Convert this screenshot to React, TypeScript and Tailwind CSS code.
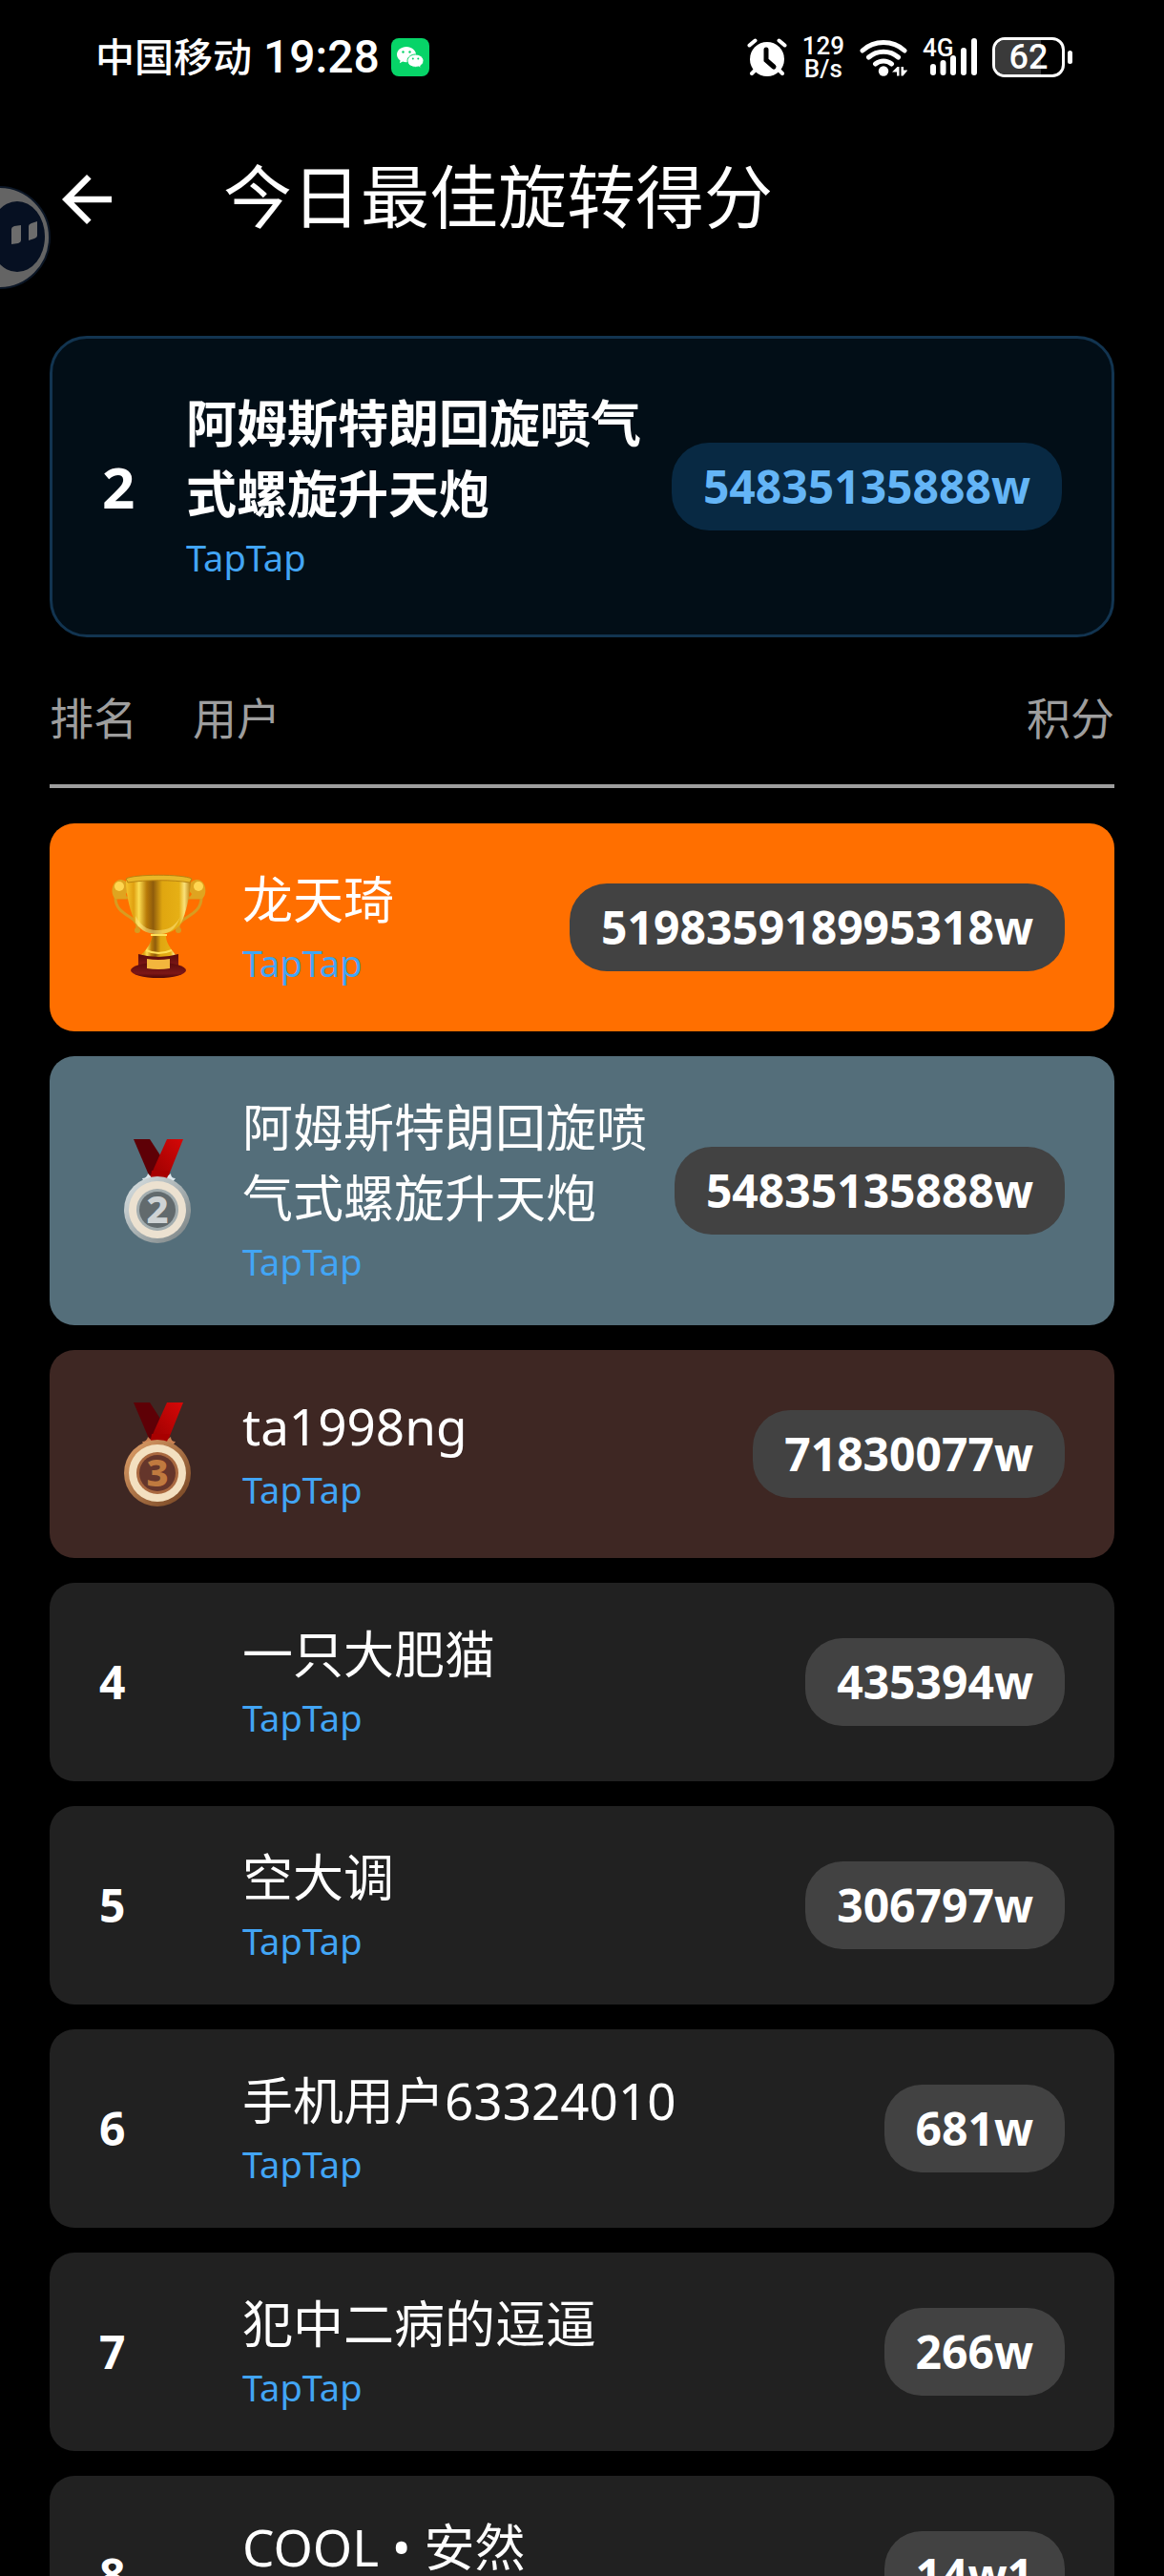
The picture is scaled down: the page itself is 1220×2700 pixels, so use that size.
import type { ReactNode } from "react";
import { MdArrowBack } from "react-icons/md";

type Player = {
  name: string;
  rank: number;
  score: string;
  source: string;
};

const me: Player = { name: "阿姆斯特朗回旋喷气式螺旋升天炮", rank: 2, score: "54835135888w", source: "TapTap" };

const players: Player[] = [
  { name: "龙天琦", rank: 1, score: "519835918995318w", source: "TapTap" },
  { name: "阿姆斯特朗回旋喷气式螺旋升天炮", rank: 2, score: "54835135888w", source: "TapTap" },
  { name: "ta1998ng", rank: 3, score: "71830077w", source: "TapTap" },
  { name: "一只大肥猫", rank: 4, score: "435394w", source: "TapTap" },
  { name: "空大调", rank: 5, score: "306797w", source: "TapTap" },
  { name: "手机用户63324010", rank: 6, score: "681w", source: "TapTap" },
  { name: "犯中二病的逗逼", rank: 7, score: "266w", source: "TapTap" },
  { name: "COOL • 安然", rank: 8, score: "14w1", source: "TapTap" },
];

export default function App() {
  return (
    <div className="relative h-screen overflow-hidden bg-black font-['Noto_Sans','Noto_Sans_CJK_SC',sans-serif] text-white">
      <StatusBar />

      <header className="flex h-[170px] items-center gap-[104px] px-[52px]">
        <button aria-label="返回" className="mt-2" type="button">
          <MdArrowBack className="size-[78px]" />
        </button>
        <h1 className="text-[72px] leading-[96px]">今日最佳旋转得分</h1>
      </header>

      <main className="px-[52px] pt-[62px]">
        <section className="flex items-center rounded-[39px] border-3 border-[#123450] bg-[#020e17] p-[52px]">
          <p className="w-[88px] shrink-0 text-[60px] leading-[92px] font-bold">{me.rank}</p>
          <PlayerName bold player={me} />
          <p className="ml-[26px] shrink-0 rounded-[39px] bg-[#082943] px-[33px] text-[48px] leading-[92px] font-bold text-[#64b5f6]">{me.score}</p>
        </section>

        <table className="mt-[52px] block">
          <thead className="block border-b-4 border-[#9e9e9e] pb-[38px] text-[46px] leading-[64px] text-[#9e9e9e]">
            <tr className="flex">
              <th className="w-[150px] text-left font-normal" scope="col">排名</th>
              <th className="flex-1 text-left font-normal" scope="col">用户</th>
              <th className="font-normal" scope="col">积分</th>
            </tr>
          </thead>
          <tbody className="mt-[37px] flex flex-col gap-[26px]">
            {players.map((player) => (
              <PlayerRow key={player.rank} player={player} />
            ))}
          </tbody>
        </table>
      </main>

      <FloatingBall />
    </div>
  );
}

function PlayerRow({ player }: { player: Player }) {
  const tones: Record<number, string> = {
    1: "min-h-[218px] bg-[#ff6f00]",
    2: "min-h-[218px] bg-[#546e7a]",
    3: "min-h-[218px] bg-[#3e2723]",
  };
  const badges: Record<number, ReactNode> = {
    1: <Trophy />,
    2: <Medal rank={2} />,
    3: <Medal rank={3} />,
  };

  return (
    <tr className={`flex items-center rounded-[26px] px-[52px] py-[38px] ${tones[player.rank] ?? "bg-[#212121]"}`}>
      <td className="w-[150px] shrink-0 text-[48px] leading-[92px] font-bold">{badges[player.rank] ?? player.rank}</td>
      <td className="flex-1"><PlayerName player={player} /></td>
      <td className="ml-[26px] shrink-0 rounded-[39px] bg-[#424242] px-[33px] text-[48px] leading-[92px] font-bold">{player.score}</td>
    </tr>
  );
}

function PlayerName({ bold = false, player }: { bold?: boolean; player: Player }) {
  return (
    <div className="min-w-0 flex-1">
      <p className={`text-[53px] leading-[74px] break-all ${bold ? "font-bold" : ""}`}>{player.name}</p>
      <p className="text-[38px] leading-[58px] text-[#42a5f5]">{player.source}</p>
    </div>
  );
}

function StatusBar() {
  return (
    <div className="flex h-[120px] items-center justify-between pr-[96px] pl-[100px]">
      <div className="flex items-center gap-3">
        <span className="text-[41px] font-medium">中国移动</span>
        <span className="font-['Roboto',sans-serif] text-[48px] font-medium">19:28</span>
        <WeChatIcon />
      </div>
      <div className="flex items-center gap-4 font-['Roboto',sans-serif]">
        <AlarmIcon />
        <div className="text-center text-[26px] leading-[24px] font-medium">
          <p>129</p>
          <p>B/s</p>
        </div>
        <WifiIcon />
        <SignalIcon />
        <Battery level={62} />
      </div>
    </div>
  );
}

function WeChatIcon() {
  return (
    <svg aria-hidden="true" className="size-[40px]" viewBox="0 0 40 40">
      <rect fill="#07d468" height="40" rx="8" width="40" />
      <path d="M16 9C10.500 9 6 12.600 6 17.200c0 2.600 1.400 4.800 3.600 6.300L8.800 26.300l3.300-1.700c1.200.4 2.500.6 3.900.6 5.500 0 10-3.600 10-8S21.500 9 16 9z" fill="#fff" />
      <path d="M25.500 17c-4.700 0-8.500 3-8.500 6.700s3.800 6.700 8.500 6.700c1.100 0 2.200-.2 3.200-.5l2.700 1.400-.7-2.400c2-1.200 3.300-3.100 3.300-5.200 0-3.700-3.800-6.700-8.500-6.700z" fill="#fff" stroke="#07d468" strokeWidth="1" />
      <circle cx="12.500" cy="14.500" fill="#07d468" r="1.200" />
      <circle cx="19.500" cy="14.500" fill="#07d468" r="1.200" />
      <circle cx="22.800" cy="21.500" fill="#07d468" r="1" />
      <circle cx="28.300" cy="21.500" fill="#07d468" r="1" />
    </svg>
  );
}

function AlarmIcon() {
  return (
    <svg aria-hidden="true" className="h-[40px] w-[42px]" fill="none" strokeLinecap="round" viewBox="0 0 42 40">
      <circle cx="21" cy="22" fill="#fff" r="18" />
      <path d="M2.500 7.500 8.500 2.500M39.500 7.500l-6-5M9 33l-4 4M33 33l4 4" stroke="#fff" strokeWidth="4" />
      <path d="M20 12v11l8 7" stroke="#000" strokeWidth="5" />
    </svg>
  );
}

function WifiIcon() {
  return (
    <svg aria-hidden="true" className="h-[40px] w-[50px]" fill="none" strokeLinecap="round" viewBox="0 0 50 40">
      <path d="M3 13a33 33 0 0 1 44 0M9.500 20a23.500 23.500 0 0 1 31 0M16.500 27a13.500 13.500 0 0 1 17 0" stroke="#fff" strokeWidth="5" />
      <circle cx="25" cy="34.500" fill="#fff" r="5.200" />
      <path d="M34 35.500l5.500-5.500h2v9.500h-2.500v-4zM43.500 30h2.500v3.500h4.500l-5 6h-2z" fill="#fff" />
    </svg>
  );
}

function SignalIcon() {
  return (
    <div className="relative h-[40px] w-[57px]">
      <span className="absolute top-0 left-0 text-[26px] leading-[20px] font-medium">4G</span>
      <svg aria-hidden="true" className="size-full" strokeLinecap="round" viewBox="0 0 57 40">
        <path d="M11 30v6M21.500 26v10M32 21v15M43 13v23M54 3v33" stroke="#fff" strokeWidth="6" />
      </svg>
    </div>
  );
}

function Battery({ level }: { level: number }) {
  return (
    <div className="flex items-center gap-[3px]">
      <div className="relative flex h-[42px] w-[76px] items-center justify-center overflow-hidden rounded-[13px] border-3 border-white">
        <div className="absolute inset-y-0 left-0 bg-[#3a3a3a]" style={{ width: `${level + 6}%` }} />
        <span className="relative text-[36px] font-medium">{level}</span>
      </div>
      <div className="h-[14px] w-[5px] rounded-full bg-white" />
    </div>
  );
}

function FloatingBall() {
  return (
    <svg aria-hidden="true" className="absolute top-[193px] left-0 h-[112px] w-[56px]" viewBox="0 0 56 112">
      <circle cx="-1" cy="56" fill="#646464" r="53" stroke="#0b1626" strokeWidth="2" />
      <ellipse cx="18" cy="55" fill="#061022" rx="29" ry="37" />
      <path d="M12 47q0-2 3-3l7-1v16q0 2-3 3l-7 1zM30 44q0-2 3-3l6-2v15q0 2-3 3l-6 2z" fill="#6c6c6c" />
    </svg>
  );
}

function Trophy() {
  return (
    <svg aria-label="1" className="h-[114px] w-[124px]" role="img" viewBox="0 0 124 114">
      <defs>
        <linearGradient id="cup" x1="0" x2="1">
          <stop offset="0" stopColor="#f6c52c" />
          <stop offset=".12" stopColor="#e0a010" />
          <stop offset=".2" stopColor="#fbdc50" />
          <stop offset=".32" stopColor="#b87a08" />
          <stop offset=".42" stopColor="#8f5c0c" />
          <stop offset=".56" stopColor="#e0a610" />
          <stop offset=".82" stopColor="#e6b015" />
          <stop offset=".9" stopColor="#fbe27a" />
          <stop offset="1" stopColor="#b87d0a" />
        </linearGradient>
        <linearGradient id="cup-base" x1="0" x2="0" y1="0" y2="1">
          <stop offset="0" stopColor="#5a0b0b" />
          <stop offset=".7" stopColor="#7c1717" />
          <stop offset="1" stopColor="#4c0606" />
        </linearGradient>
      </defs>
      <g fill="none" stroke="#d79c20" strokeLinecap="round" strokeWidth="3">
        <path d="M29 26H17c0 13 11 17 19 23 3 3 4 5 4 8M93 26h14c0 13-10 17-19 23-4 3-5 5-5 8" />
        <circle cx="40" cy="60" r="1.500" />
        <circle cx="83" cy="60" r="1.500" />
      </g>
      <path d="M29 27H17c-6-5-4-19 5-20 8 0 12 9 6 15z" fill="#dfa420" />
      <path d="M94 27h14c6-5 4-19-5-20-8 0-12 9-6 15z" fill="#dfa420" />
      <circle cx="21" cy="14" fill="#ffd651" r="5" />
      <circle cx="104" cy="14" fill="#ffd651" r="5" />
      <path d="M28 8c0 16 5 34 10 44 7 10 16 12 24 12s18-2 24-12c5-10 9-28 10-44z" fill="url(#cup)" />
      <path d="M38 45c7 13 15 15 24 15s17-3 23-14c-6 16-14 18-23 18s-18-2-24-12z" fill="#ffe98a" opacity=".5" />
      <path d="M28 6c8-5 60-5 69 0l-2 4c-18-3-47-3-65 0z" fill="#e9b728" stroke="#b98310" />
      <path d="M56 64h14c-1 8 5 16 12 24H42c8-8 13-15 14-24z" fill="url(#cup)" />
      <path d="M54 65h17M49 81q13 6 27 0" fill="none" stroke="#ffdf57" strokeWidth="2" />
      <path d="M41 85q21 6 42 0v17H41z" fill="url(#cup-base)" />
      <ellipse cx="62" cy="102" fill="url(#cup-base)" rx="29" ry="8" />
      <path d="M50 90q12 2 24 0v10q-12 2-24 0z" fill="#f3b63d" />
    </svg>
  );
}

function Medal({ rank }: { rank: 2 | 3 }) {
  const silver = rank === 2;
  const rim = silver ? "#a3adaf" : "#a9683f";
  const ring = silver ? "#ece1d0" : "#f3e0c0";
  const core = silver ? "#626a6d" : "#65362b";
  const digit = silver ? "#cfd3d5" : "#c07a3f";

  return (
    <svg aria-label={String(rank)} className="h-[114px] w-[124px]" role="img" viewBox="0 0 124 114">
      <defs>
        <linearGradient id={`ribbon-${rank}`} x1="0" x2="1" y1="1" y2="0">
          <stop offset="0" stopColor="#980000" />
          <stop offset="1" stopColor="#d60808" />
        </linearGradient>
        <linearGradient id={`rim-${rank}`} x1="0" x2="1" y1="0" y2="1">
          <stop offset="0" stopColor={silver ? "#dde5e7" : "#e3a36c"} />
          <stop offset="1" stopColor={silver ? "#777f80" : "#70401f"} />
        </linearGradient>
      </defs>
      <path d="M36 3h17l13 20-8 20h-5z" fill="#5e0006" />
      <path d="M71 3h17L72 43H53z" fill={`url(#ribbon-${rank})`} />
      <path d="M45 44q5 0 6-5l4 4h15l5-4q0 5 5 5l-3 4H47z" fill={silver ? "#dce7ec" : "#c98051"} />
      <path d="M55 36h19l-3 8H54z" fill="#a80000" />
      <circle cx="61" cy="77" fill={`url(#rim-${rank})`} r="35" />
      <circle cx="61" cy="77" fill={ring} r="30" />
      <circle cx="61" cy="77" fill={rim} r="22" />
      <circle cx="61" cy="77" fill={core} r="19" />
      <text fill={digit} fontFamily="Noto Sans" fontSize="40" fontWeight="800" textAnchor="middle" x="61" y="91">{rank}</text>
    </svg>
  );
}
